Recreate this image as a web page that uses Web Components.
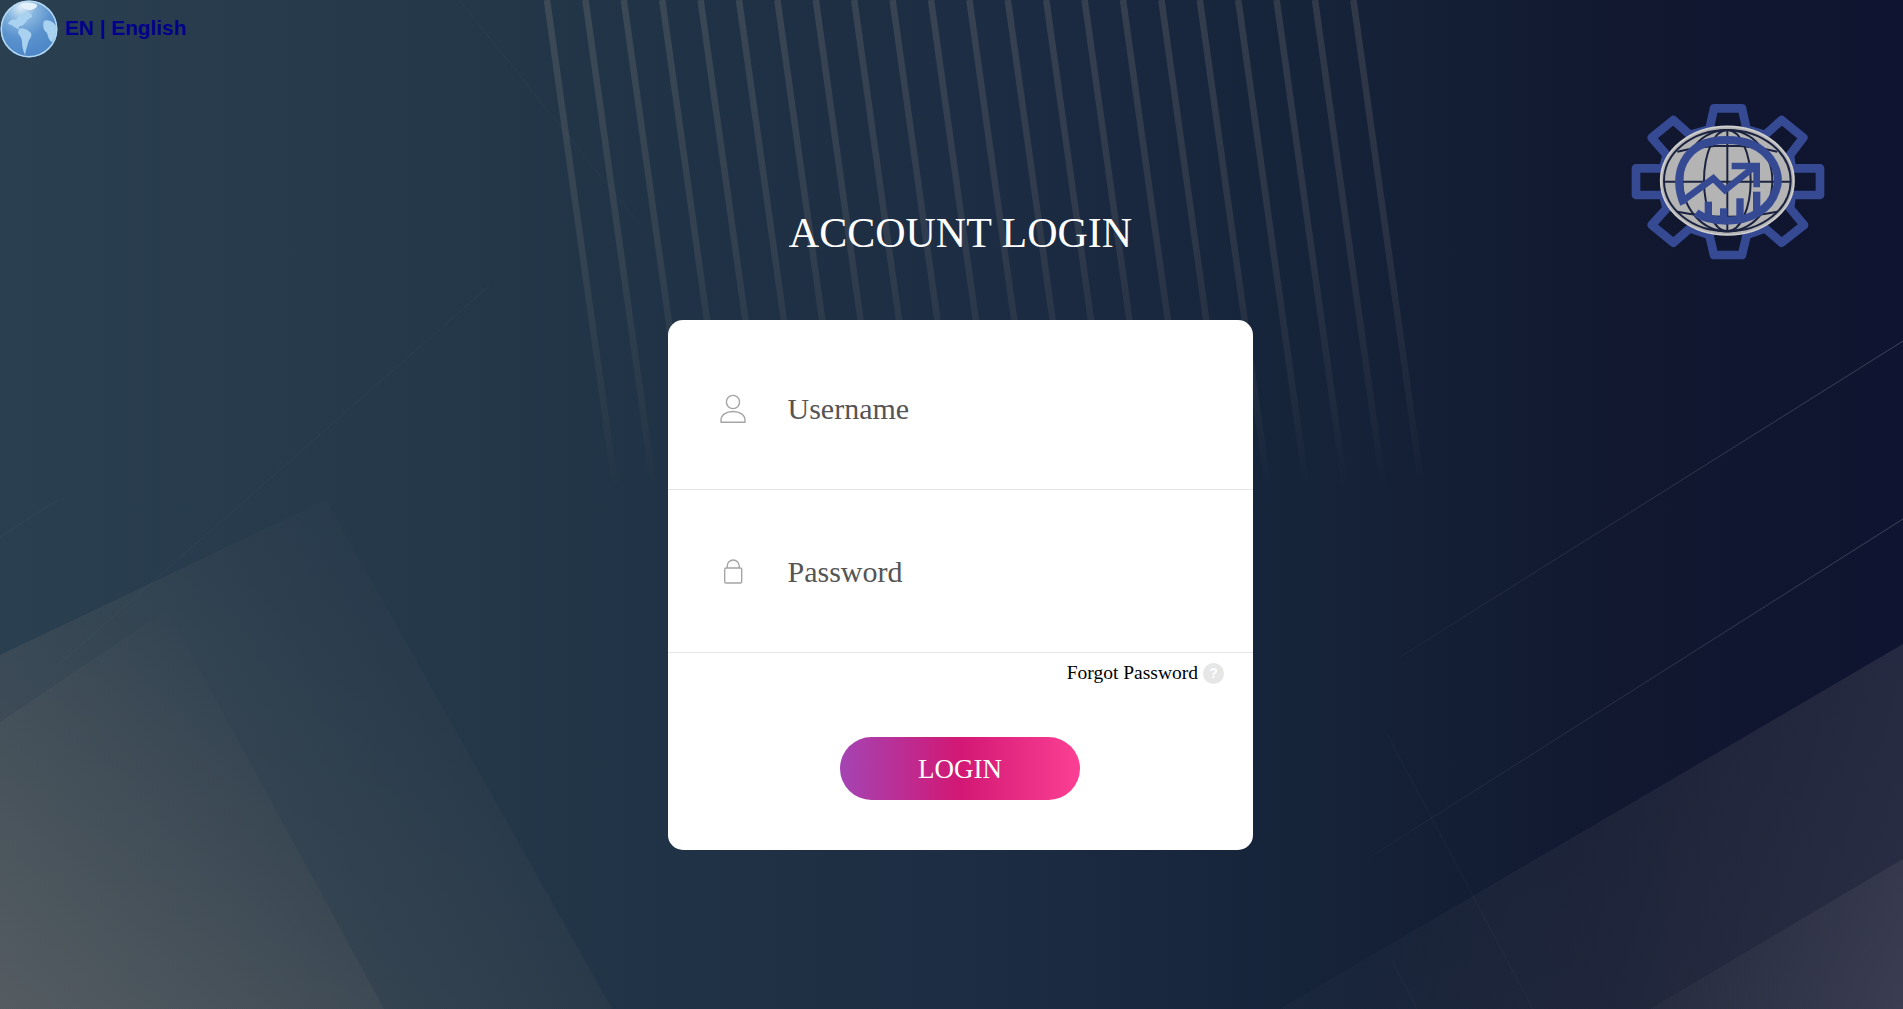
<!DOCTYPE html>
<html lang="en">
<head>
<meta charset="UTF-8">
<title>Account Login</title>
<style>
  html, body { margin: 0; height: 100%; }
  body { background-color: #1e2e43; overflow: hidden; }
</style>
</head>
<body>
<template id="scene-bg-tpl">
<style>
  :host { position: absolute; inset: 0; display: block; background: linear-gradient(90deg, #2a3f50 0%, #243749 26%, #203245 36%, #1d2d43 50%, #16243a 68%, #11182f 85%, #0f1430 100%); }
  svg { display: block; width: 100%; height: 100%; }
</style>
<svg viewBox="0 0 1903 1009" preserveAspectRatio="none">
  <defs>
    <linearGradient id="stripe" gradientUnits="userSpaceOnUse" x1="0" y1="0" x2="0" y2="490">
      <stop offset="0" stop-color="#ddc8b0" stop-opacity=".14"/>
      <stop offset=".5" stop-color="#ddc8b0" stop-opacity=".1"/>
      <stop offset=".85" stop-color="#ddc8b0" stop-opacity=".04"/>
      <stop offset="1" stop-color="#ddc8b0" stop-opacity="0"/>
    </linearGradient>
    <linearGradient id="leftBand" gradientUnits="userSpaceOnUse" x1="0" y1="1009" x2="420" y2="620">
      <stop offset="0" stop-color="#c8a888" stop-opacity=".17"/>
      <stop offset="1" stop-color="#c8a888" stop-opacity=".015"/>
    </linearGradient>
    <linearGradient id="leftGray" gradientUnits="userSpaceOnUse" x1="0" y1="1009" x2="260" y2="650">
      <stop offset="0" stop-color="#c8b098" stop-opacity=".12"/>
      <stop offset="1" stop-color="#c8b098" stop-opacity=".005"/>
    </linearGradient>
    <linearGradient id="rightBand" gradientUnits="userSpaceOnUse" x1="1903" y1="1009" x2="1400" y2="850">
      <stop offset="0" stop-color="#c8c4bc" stop-opacity=".15"/>
      <stop offset="1" stop-color="#c8c4bc" stop-opacity=".02"/>
    </linearGradient>
    <linearGradient id="rightGray" gradientUnits="userSpaceOnUse" x1="1903" y1="1009" x2="1650" y2="900">
      <stop offset="0" stop-color="#c8c4bc" stop-opacity=".1"/>
      <stop offset="1" stop-color="#c8c4bc" stop-opacity=".02"/>
    </linearGradient>
    <linearGradient id="hair" gradientUnits="userSpaceOnUse" x1="1903" y1="0" x2="1370" y2="0">
      <stop offset="0" stop-color="#fff" stop-opacity=".2"/>
      <stop offset="1" stop-color="#fff" stop-opacity=".02"/>
    </linearGradient>
  </defs>
  <polygon points="0,655 326,500 612,1009 0,1009" fill="url(#leftBand)"/>
  <polygon points="0,722 167,610 384,1009 0,1009" fill="url(#leftGray)"/>
  <polygon points="1903,644 1280,1009 1903,1009" fill="url(#rightBand)"/>
  <polygon points="1903,859 1650,1009 1903,1009" fill="url(#rightGray)"/>
  <g id="stripes" fill="none" stroke="url(#stripe)" stroke-width="6.500"></g>
  <g fill="none" stroke-width="1">
    <path d="M1903 341L1400 657M1903 519L1367 859" stroke="url(#hair)"/>
    <path d="M1387 734L1533 1009M1392 960L1417 1009" stroke="#fff" stroke-opacity=".04"/>
    <path d="M459 0L640 225M58 665L490 285M0 537L58 500" stroke="#fff" stroke-opacity=".035"/>
  </g>
</svg>
</template>

<template id="lang-switch-tpl">
<style>
  :host { display: flex; align-items: center; gap: 7px; height: 58px; font: bold 20.8px "Liberation Sans", Arial, sans-serif; color: #00008b; }
  svg { width: 58px; height: 58px; flex: none; }
  span { padding-bottom: 2px; }
</style>
<svg viewBox="0 0 58 58">
  <defs>
    <radialGradient id="sea" cx=".36" cy=".12" r=".9">
      <stop offset="0" stop-color="#dcecf8"/>
      <stop offset=".28" stop-color="#86b5de"/>
      <stop offset=".6" stop-color="#5a92ce"/>
      <stop offset="1" stop-color="#4c85c6"/>
    </radialGradient>
  </defs>
  <circle cx="29" cy="29" r="28.500" fill="url(#sea)"/>
  <circle cx="29" cy="29" r="27.700" fill="none" stroke="#b5d9f1" stroke-width="1.500"/>
  <g fill="#a8d2f0">
    <path d="M8 23C11 20 13 18 16 20C18 16 22 12 27 12C30 13 33 15 32 17C29 18 27 20 26 22C24 24 23 26 20 26C18 27 18 29 20 30C17 29 15 27 13 26C11 24 10 26 8 23Z"/>
    <path d="M19 29C23 27 28 30 31 33C32 35 31 38 29 40C28 43 26 50 25 55C23 51 22 46 22 42C22 38 20 36 18 33Z"/>
    <path d="M44 21C48 19 53 21 56 26C57 32 55 38 52 42C49 41 48 36 47 33C44 31 42 26 44 21Z"/>
    <path d="M20 4C24 2 30 2 36 4C39 6 35 9 31 10C27 10 22 9 20 4Z" fill="#e4f0fa"/>
  </g>
</svg>
<span><slot></slot></span>
</template>

<template id="brand-logo-tpl">
<style>
  :host { display: block; width: 220px; height: 180px; }
  svg { display: block; width: 100%; height: 100%; }
</style>
<svg viewBox="0 0 660 540">
  <path fill="none" stroke="#354a93" stroke-width="26" stroke-linejoin="round" d="M298 118L312 55H396L410 118L465 135L515 90L580 143L540 195L545 235H630V315H545L540 355L582 405L515 458L465 415L410 435L396 495H312L298 435L240 415L190 458L125 405L170 355L160 315H78V235H160L170 195L125 143L190 90L240 135Z"/>
  <ellipse cx="352" cy="272" rx="200" ry="163" fill="#b4b4b4" stroke="#d0d0d0" stroke-width="5"/>
  <g fill="none" stroke="#1b2340" stroke-width="6">
    <ellipse cx="352" cy="272" rx="190" ry="152"/>
    <ellipse cx="352" cy="272" rx="70" ry="152"/>
    <ellipse cx="352" cy="272" rx="135" ry="152"/>
    <path d="M352 120V424M162 275H542M202 185Q352 150 502 185M202 365Q352 395 502 365"/>
  </g>
  <g fill="none" stroke="#354a93">
    <path stroke-width="24" d="M222 342C185 260 215 150 350 150C480 150 520 250 498 300C480 360 420 392 350 392C310 392 280 385 258 368"/>
    <path stroke-width="20" stroke-linejoin="miter" d="M215 335L310 265L345 300L440 225M365 228H440V292"/>
  </g>
  <g fill="#354a93">
    <rect x="284" y="335" width="22" height="52"/>
    <rect x="330" y="355" width="22" height="36"/>
    <rect x="379" y="325" width="22" height="62"/>
    <rect x="429" y="305" width="22" height="68"/>
  </g>
</svg>
</template>

<template id="login-field-tpl">
<style>
  :host { display: flex; align-items: center; box-sizing: border-box; height: 163px; border-bottom: 1px solid #e6e6e6; padding: 2px 0 0 52px; font: 30px "Liberation Serif", "Times New Roman", serif; color: #555; }
  .ico { width: 26px; height: 30px; margin-right: 41.500px; display: flex; flex: none; }
  ::slotted(svg) { width: 26px; height: 30px; }
</style>
<span class="ico"><slot name="icon"></slot></span>
<span><slot></slot></span>
</template>

<template id="forgot-link-tpl">
<style>
  :host { display: flex; justify-content: flex-end; align-items: center; gap: 5px; box-sizing: border-box; height: 38px; padding: 2px 29px 0 0; font: 19.5px "Liberation Serif", "Times New Roman", serif; color: #000; }
  i { width: 21px; height: 21px; border-radius: 50%; background: #e6e6e6; color: #fff; font: bold 14px/21px "Liberation Sans", Arial, sans-serif; text-align: center; }
</style>
<span><slot></slot></span><i>?</i>
</template>

<template id="login-button-tpl">
<style>
  :host { display: flex; justify-content: center; margin-top: 46px; padding-right: 1px; }
  button { width: 240px; height: 63px; border: 0; border-radius: 32px; background: linear-gradient(90deg, #a444b4 0%, #d21874 50%, #fb4094 100%); color: #fff; font: 27px "Liberation Serif", "Times New Roman", serif; padding: 2px 0 0; }
</style>
<button><slot></slot></button>
</template>

<template id="login-card-tpl">
<style>
  :host { display: flex; flex-direction: column; box-sizing: border-box; height: 530px; padding-top: 7px; background: #fff; border-radius: 15px; }
</style>
<slot></slot>
</template>

<template id="login-page-tpl">
<style>
  :host { position: relative; display: grid; grid-template-columns: 668px 585px 1fr; grid-template-rows: 58px 262px auto; height: 100vh; }
  .lang { grid-column: 1 / -1; }
  .title { grid-column: 2; grid-row: 2; align-self: start; margin-top: 149px; text-align: center; font: 42px/52px "Liberation Serif", "Times New Roman", serif; color: #fff; }
  .logo { grid-column: 3; grid-row: 2 / 4; padding: 32px 0 0 357px; }
  .card { grid-column: 2; grid-row: 3; }
</style>
<div class="lang"><slot name="lang"></slot></div>
<div class="title"><slot name="title"></slot></div>
<div class="logo"><slot name="logo"></slot></div>
<div class="card"><slot name="card"></slot></div>
</template>

<scene-bg></scene-bg>
<login-page>
  <lang-switch slot="lang">EN | English</lang-switch>
  <span slot="title">ACCOUNT LOGIN</span>
  <brand-logo slot="logo"></brand-logo>
  <login-card slot="card">
    <login-field>
      <svg slot="icon" viewBox="0 0 26 30" fill="none" stroke="#a5a5a5" stroke-width="1.400"><circle cx="13" cy="8" r="6.600"/><path d="M1 28.300v-2C1 21 6 17.500 13 17.500S25 21 25 26.300v2z" stroke-linejoin="round"/></svg>
      Username
    </login-field>
    <login-field>
      <svg slot="icon" viewBox="0 0 26 30" fill="none" stroke="#a5a5a5" stroke-width="1.400"><rect x="4.700" y="11" width="17" height="15" rx="1.500"/><path d="M7.200 11V9a6 6 0 0 1 12 0v2"/></svg>
      Password
    </login-field>
    <forgot-link>Forgot Password</forgot-link>
    <login-button>LOGIN</login-button>
  </login-card>
</login-page>

<script>
// every element is just its template in an open shadow root
function simple(name) {
  customElements.define(name, class extends HTMLElement {
    connectedCallback() {
      let root = this.attachShadow({ mode: "open" });
      root.appendChild(document.getElementById(name + "-tpl").content.cloneNode(true));
      if (name === "scene-bg") {
        let group = root.getElementById("stripes");
        for (let i = 0; i < 22; i++) {
          let x = 547 + i * 38.4;
          let line = document.createElementNS("http://www.w3.org/2000/svg", "line");
          line.setAttribute("x1", x);
          line.setAttribute("y1", 0);
          line.setAttribute("x2", x + 70);
          line.setAttribute("y2", 500);
          group.appendChild(line);
        }
      }
    }
  });
}
["scene-bg", "lang-switch", "brand-logo", "login-field", "forgot-link", "login-button", "login-card", "login-page"].forEach(simple);
</script>
</body>
</html>
